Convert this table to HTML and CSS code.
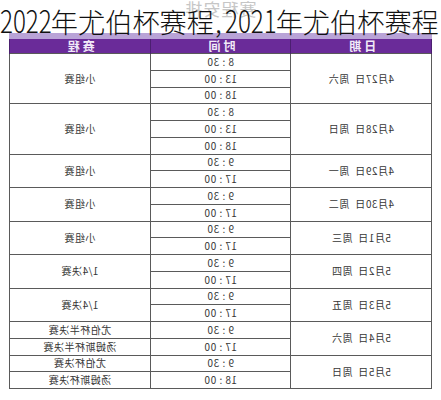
FILE: index.html
```html
<!DOCTYPE html>
<html lang="zh">
<head>
<meta charset="utf-8">
<title>2022年尤伯杯赛程</title>
<link rel="stylesheet" href="styles.css">
</head>
<body>
<div class="sheet">
  <div class="caption">赛程安排</div>
  <table class="schedule">
    <thead>
      <tr><th>日期</th><th>时间</th><th>赛程</th></tr>
    </thead>
    <tbody>
      <tr><td rowspan="3">4月27日&nbsp;&nbsp;周六</td><td>8 : 30</td><td rowspan="3">小组赛</td></tr>
      <tr><td>13 : 00</td></tr>
      <tr><td>18 : 00</td></tr>
      <tr><td rowspan="3">4月28日&nbsp;&nbsp;周日</td><td>8 : 30</td><td rowspan="3">小组赛</td></tr>
      <tr><td>13 : 00</td></tr>
      <tr><td>18 : 00</td></tr>
      <tr><td rowspan="2">4月29日&nbsp;&nbsp;周一</td><td>9 : 30</td><td rowspan="2">小组赛</td></tr>
      <tr><td>17 : 00</td></tr>
      <tr><td rowspan="2">4月30日&nbsp;&nbsp;周二</td><td>9 : 30</td><td rowspan="2">小组赛</td></tr>
      <tr><td>17 : 00</td></tr>
      <tr><td rowspan="2">5月1日&nbsp;&nbsp;周三</td><td>9 : 30</td><td rowspan="2">小组赛</td></tr>
      <tr><td>17 : 00</td></tr>
      <tr><td rowspan="2">5月2日&nbsp;&nbsp;周四</td><td>9 : 30</td><td rowspan="2">1/4决赛</td></tr>
      <tr><td>17 : 00</td></tr>
      <tr><td rowspan="2">5月3日&nbsp;&nbsp;周五</td><td>9 : 30</td><td rowspan="2">1/4决赛</td></tr>
      <tr><td>17 : 00</td></tr>
      <tr><td rowspan="2">5月4日&nbsp;&nbsp;周六</td><td>9 : 30</td><td>尤伯杯半决赛</td></tr>
      <tr><td>17 : 00</td><td>汤姆斯杯半决赛</td></tr>
      <tr><td rowspan="2">5月5日&nbsp;&nbsp;周日</td><td>9 : 30</td><td>尤伯杯决赛</td></tr>
      <tr><td>18 : 00</td><td>汤姆斯杯决赛</td></tr>
    </tbody>
  </table>
</div>
<h1 class="title"><span class="num">2022</span>年尤伯杯赛程<span class="comma">,</span><span class="num">2021</span>年尤伯杯赛程</h1>
</body>
</html>
```
FILE: styles.css
```css
html, body {
  margin: 0;
  padding: 0;
  background: #ffffff;
}
body {
  width: 441px;
  height: 400px;
  overflow: hidden;
  position: relative;
  font-family: "Noto Sans CJK SC", "Noto Sans", sans-serif;
}
.title {
  position: absolute;
  left: 0;
  top: 6px;
  margin: 0;
  font-size: 27.2px;
  line-height: 27px;
  font-weight: 300;
  color: #111111;
  white-space: nowrap;
}
.title .num {
  display: inline-block;
  font-size: 31px;
  line-height: 27px;
  transform: scaleX(0.78);
  transform-origin: left center;
  margin-right: -15.5px;
}
.title .comma {
  margin: 0 3px 0 1px;
}
.sheet {
  margin-left: 9px;
  width: 423px;
  transform: scaleX(-1);
}
.caption {
  height: 33px;
  text-align: center;
  font-size: 17px;
  line-height: 18px;
  color: #c6c6c6;
  letter-spacing: 1px;
}
.schedule {
  width: 423px;
  border-collapse: collapse;
  table-layout: fixed;
}
.schedule th {
  height: 14px;
  padding: 0;
  background: #6a2b99;
  border-top: 6px solid #b9a3d7;
  border-left: 1px solid #4b1f70;
  border-right: 1px solid #4b1f70;
  color: #f1e9f8;
  font-size: 12px;
  line-height: 14px;
  font-weight: 700;
  letter-spacing: 3px;
}
.schedule td {
  height: 16.75px;
  padding: 0;
  border: 1px solid #5a5a5a;
  font-size: 10px;
  line-height: 14px;
  color: #363636;
  text-align: center;
  letter-spacing: 0.5px;
  box-sizing: border-box;
}
```
